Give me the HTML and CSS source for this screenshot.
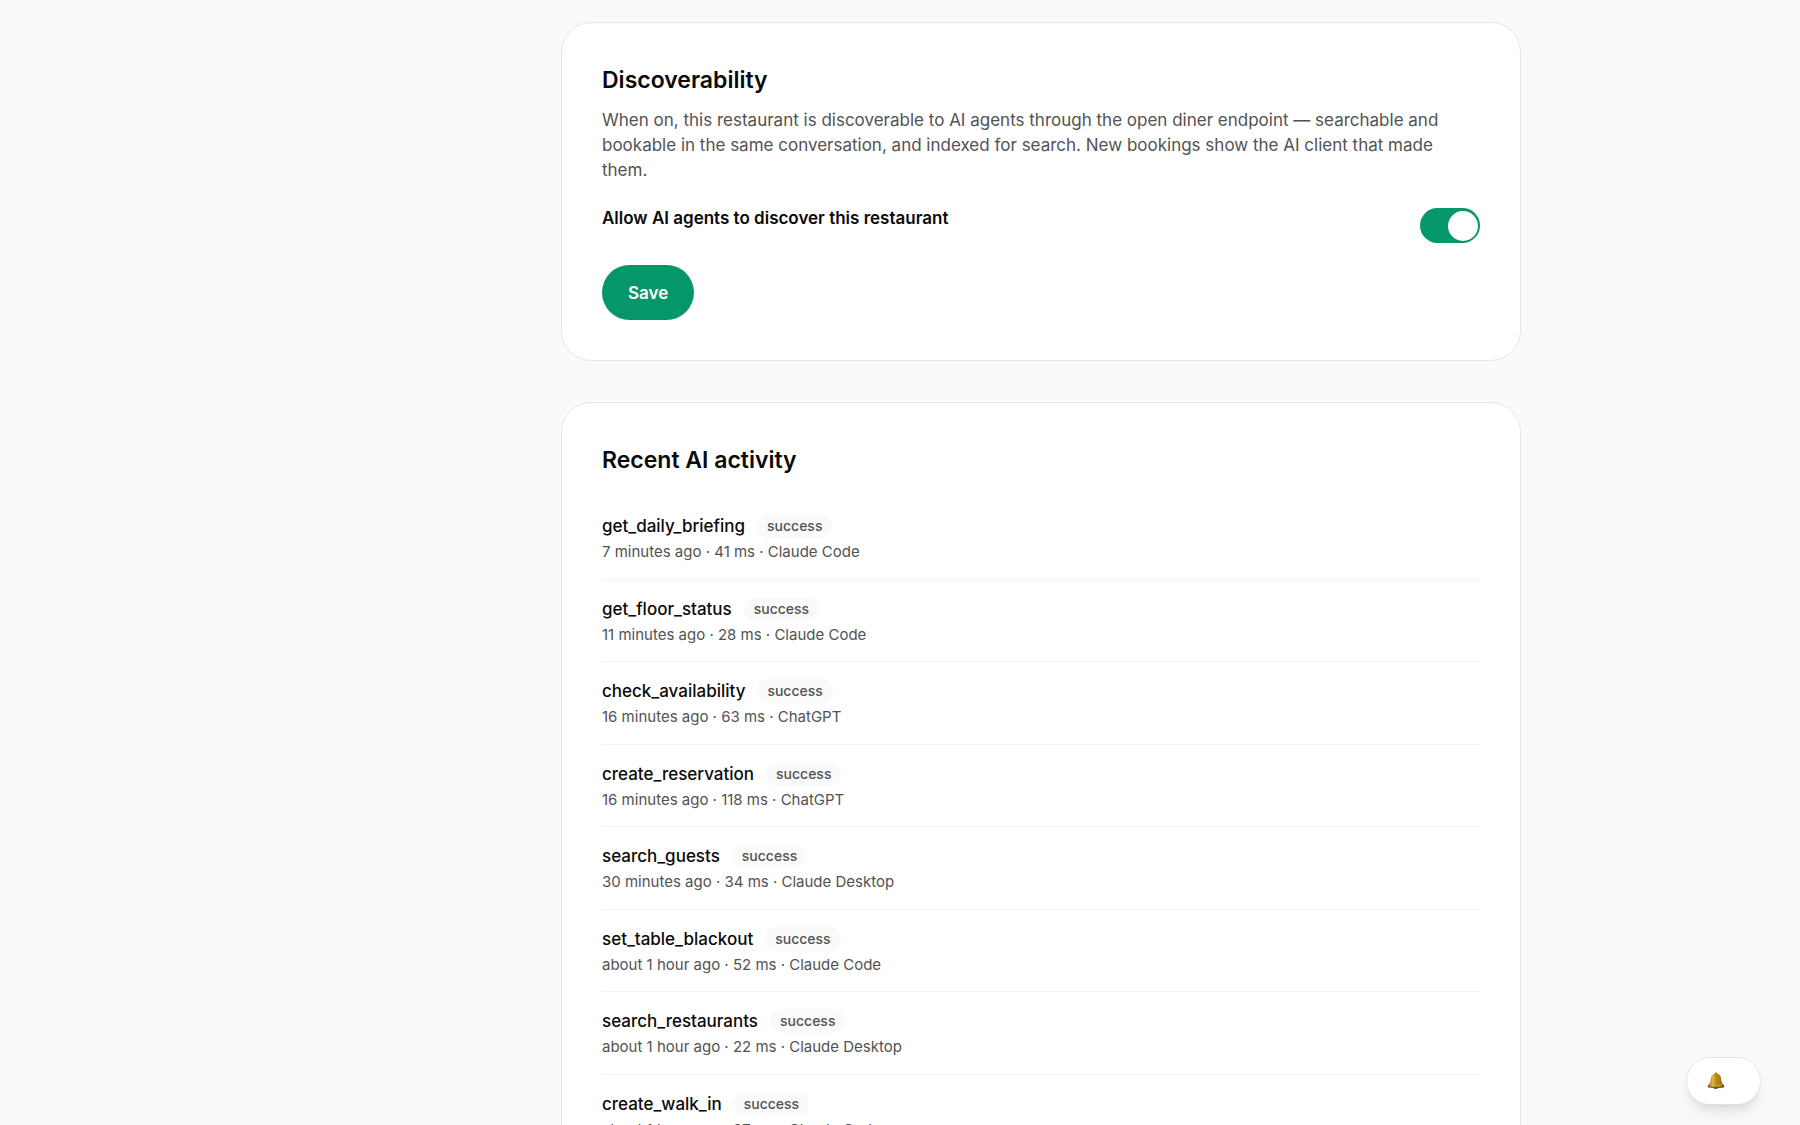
FILE: index.html
```html
<!DOCTYPE html>
<html lang="en">
<head>
<meta charset="utf-8">
<meta name="viewport" content="width=device-width, initial-scale=1">
<title>AI agents</title>
<link rel="stylesheet" href="styles.css">
</head>
<body>
<main class="page">
  <div class="content">
    <section class="card">
      <h2 class="card-title">Discoverability</h2>
      <p class="card-text">When on, this restaurant is discoverable to AI agents through the open diner endpoint — searchable and bookable in the same conversation, and indexed for search. New bookings show the AI client that made them.</p>
      <form class="settings">
        <div class="setting">
          <label class="setting-label" for="discover">Allow AI agents to discover this restaurant</label>
          <input class="switch" type="checkbox" role="switch" id="discover" checked>
        </div>
        <button class="button" type="button">Save</button>
      </form>
    </section>

    <section class="card">
      <h2 class="card-title">Recent AI activity</h2>
      <ul class="activity">
        <li class="entry"><div class="entry-head"><span class="entry-name">get_daily_briefing</span><span class="badge">success</span></div><p class="entry-meta">7 minutes ago · 41 ms · Claude Code</p></li>
        <li class="entry"><div class="entry-head"><span class="entry-name">get_floor_status</span><span class="badge">success</span></div><p class="entry-meta">11 minutes ago · 28 ms · Claude Code</p></li>
        <li class="entry"><div class="entry-head"><span class="entry-name">check_availability</span><span class="badge">success</span></div><p class="entry-meta">16 minutes ago · 63 ms · ChatGPT</p></li>
        <li class="entry"><div class="entry-head"><span class="entry-name">create_reservation</span><span class="badge">success</span></div><p class="entry-meta">16 minutes ago · 118 ms · ChatGPT</p></li>
        <li class="entry"><div class="entry-head"><span class="entry-name">search_guests</span><span class="badge">success</span></div><p class="entry-meta">30 minutes ago · 34 ms · Claude Desktop</p></li>
        <li class="entry"><div class="entry-head"><span class="entry-name">set_table_blackout</span><span class="badge">success</span></div><p class="entry-meta">about 1 hour ago · 52 ms · Claude Code</p></li>
        <li class="entry"><div class="entry-head"><span class="entry-name">search_restaurants</span><span class="badge">success</span></div><p class="entry-meta">about 1 hour ago · 22 ms · Claude Desktop</p></li>
        <li class="entry"><div class="entry-head"><span class="entry-name">create_walk_in</span><span class="badge">success</span></div><p class="entry-meta">about 1 hour ago · 37 ms · Claude Code</p></li>
      </ul>
    </section>
  </div>
</main>

<button class="notify" type="button" aria-label="Notifications">
  <svg class="bell" viewBox="0 0 18 18" aria-hidden="true">
    <defs>
      <linearGradient id="brass" x1="0" x2="1" y1="0" y2="0">
        <stop offset="0" stop-color="#7a5a12"/>
        <stop offset=".3" stop-color="#dcb640"/>
        <stop offset=".5" stop-color="#b98c1e"/>
        <stop offset=".75" stop-color="#a87a14"/>
        <stop offset="1" stop-color="#64470c"/>
      </linearGradient>
    </defs>
    <circle cx="9" cy="1.700" r="1.300" fill="#8f6d18"/>
    <ellipse cx="8.800" cy="15.500" rx="2.200" ry="1.600" fill="#6b4a0c"/>
    <path d="M9 1.600c-3.200 0-4.900 2-5.100 5-.2 3.200-.6 4.700-3 6.900-.5.900-.1 1.700.8 1.900h14.600c.9-.2 1.300-1 .8-1.900-2.400-2.200-2.800-3.700-3-6.900-.2-3-1.900-5-5.100-5z" fill="url(#brass)"/>
    <path d="M2.600 12.600c3.600 1.200 9.200 1.200 12.800 0" fill="none" stroke="#d9b042" stroke-width=".8"/>
    <path d="M1.200 14.700c4.600 1.100 11 1.100 15.600 0" fill="none" stroke="#6b4a0c" stroke-width=".9"/>
  </svg>
</button>
</body>
</html>
```
FILE: styles.css
```css
:root {
  --ink: #0a0a0a;
  --muted: #525252;
  --line: #e5e5e5;
  --green: #059669;
  --sidebar: 282px;
}

* { box-sizing: border-box; }

body {
  margin: 0;
  background: #fafafa;
  color: var(--ink);
  font-family: Inter, "Liberation Sans", sans-serif;
  font-size: 17px;
}

h2, p, ul { margin: 0; padding: 0; }

.page {
  height: 100vh;
  overflow: hidden;
  padding: 22px 0 0 var(--sidebar);
}

.content {
  display: flex;
  flex-direction: column;
  gap: 41px;
  max-width: 960px;
  margin: 0 auto;
}

.card {
  padding: 40px;
  background: #fff;
  border: 1px solid var(--line);
  border-radius: 30px;
}

.card-title {
  font-size: 23px;
  font-weight: 600;
  line-height: 34px;
}

.card-text {
  max-width: 870px;
  margin-top: 11px;
  color: var(--muted);
  line-height: 25px;
}

.settings {
  display: flex;
  flex-direction: column;
  align-items: flex-start;
  gap: 22px;
  margin-top: 22px;
}

.setting {
  display: flex;
  align-items: flex-start;
  justify-content: space-between;
  gap: 20px;
  width: 100%;
}

.setting-label {
  font-weight: 600;
  line-height: 26px;
}

.switch {
  appearance: none;
  display: flex;
  align-items: center;
  justify-content: flex-start;
  width: 60px;
  height: 35px;
  margin: 3px 0 0;
  padding: 2px;
  border-radius: 18px;
  background: #d4d4d4;
}

.switch::before {
  content: "";
  width: 30px;
  height: 30px;
  border-radius: 50%;
  background: #fff;
}

.switch:checked {
  justify-content: flex-end;
  background: var(--green);
}

.button {
  height: 55px;
  padding: 0 26px;
  border: 0;
  border-radius: 28px;
  background: var(--green);
  color: #fff;
  font: 600 17px/26px Inter, "Liberation Sans", sans-serif;
}

.activity {
  margin-top: 20px;
  list-style: none;
}

.entry { padding: 15px 0; }
.entry + .entry { border-top: 1px solid #f2f2f2; }

.entry-head {
  display: flex;
  align-items: center;
  gap: 12px;
  height: 28px;
}

.entry-name { font-weight: 500; }

.badge {
  padding: 2px 10px;
  border-radius: 12px;
  background: #fafafa;
  color: var(--muted);
  font-size: 14px;
  font-weight: 500;
  line-height: 20px;
}

.entry-meta {
  margin-top: 1px;
  color: var(--muted);
  font-size: 15px;
  line-height: 1.5;
}

.notify {
  position: fixed;
  right: 39px;
  bottom: 20px;
  display: flex;
  align-items: center;
  width: 75px;
  height: 48px;
  padding: 0 20px;
  border: 1px solid var(--line);
  border-radius: 24px;
  background: #fff;
  box-shadow: 0 10px 15px -3px rgb(0 0 0 / 10%), 0 4px 6px -4px rgb(0 0 0 / 10%);
}

.bell {
  width: 18px;
  height: 18px;
}
```
